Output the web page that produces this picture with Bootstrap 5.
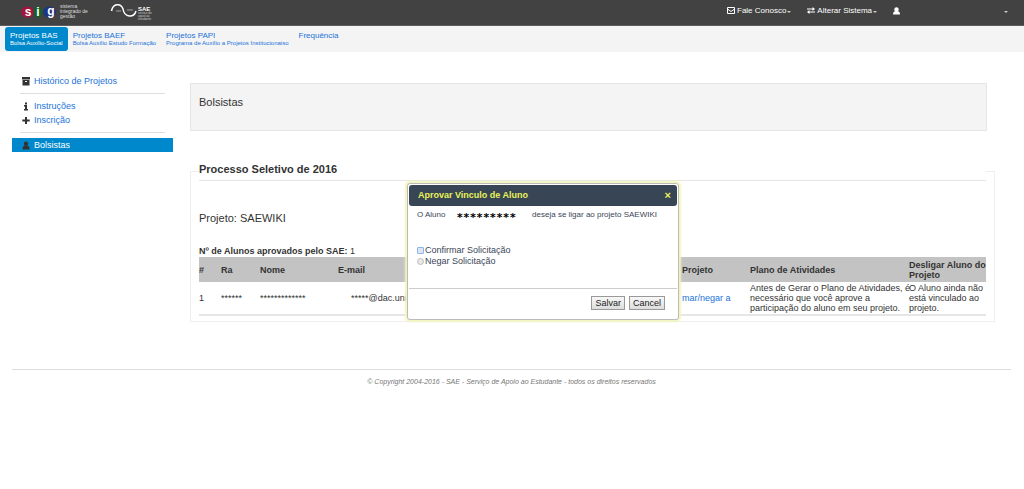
<!DOCTYPE html>
<html lang="pt-BR">
<head>
<meta charset="utf-8">
<meta name="viewport" content="width=device-width, initial-scale=1">
<title>SIG - SAE - Bolsistas</title>
<link href="https://cdn.jsdelivr.net/npm/bootstrap@5.3.0/dist/css/bootstrap.min.css" rel="stylesheet">
<style>
  body { font-family: "Liberation Sans", Arial, sans-serif; font-size: 9px; line-height: 10px; color: #333; min-height: 100vh; }
  a { color: #1a73d9; text-decoration: none; }
  .topbar { background: #424242; height: 26px; border-bottom: 1px solid #5c5c5c; padding-left: 21px; }
  .topbar a { color: #fff; font-size: 8px; }
  .topmenu { width: 297px; padding-bottom: 4px; }
  .topmenu svg { margin-right: 2px; }
  .topmenu .caret { width: 4px; border: 2px solid transparent; border-top-color: #ccc; border-bottom: 0; margin: 2px 0 0 1px; }
  .subnav { background: #f4f4f4; height: 26px; padding-left: 5px; }
  .subnav a { height: 24px; margin-top: 1px; padding: 4px 5px 0; font-size: 8px; line-height: 9px; border-radius: 3px; white-space: nowrap; }
  .subnav a.active { background: #0088cc; color: #fff; }
  .subnav small { display: block; font-size: 6px; line-height: 6px; }
  .sidebar { width: 161px; margin: 22px 17px 0 12px; }
  .sidebar a { height: 14px; padding-left: 9px; gap: 3px; }
  .sidebar a.active { background: #0088cc; color: #fff; }
  .sidebar svg { width: 10px; height: 9px; fill: #333; }
  .sidebar hr { margin: 5px 8px; border-top: 1px solid #ddd; opacity: 1; }
  .main { margin-top: 31px; padding-right: 29px; }
  .titlebox { background: #f4f4f4; border: 1px solid #e6e6e6; height: 48px; padding: 13px 8px; margin-right: 8px; font-size: 11px; line-height: 11px; }
  .process { border: 1px solid #eee; margin-top: 31px; padding: 0 8px 5px; }
  .process legend { float: none; font-size: 11px; line-height: 14px; font-weight: bold; border-bottom: 1px solid #e5e5e5; padding-bottom: 4px; margin: 0 0 30px; }
  .project { font-size: 11px; line-height: 14px; margin-bottom: 21px; }
  .count { margin-bottom: 1px; }
  .students { width: 100%; table-layout: fixed; border-bottom: 2px solid #e6e6e6; }
  .students th { background: #c3c3c3; height: 25px; padding: 0; }
  .students td { height: 33px; padding: 0; }
  .students .nw { white-space: nowrap; }
  .students .mail { padding-left: 13px; }
  .footer { margin: 47px 13px 0 12px; border-top: 1px solid #ddd; padding-top: 7px; font-size: 7px; font-style: italic; color: #777; }
  .dlg { position: absolute; left: 407px; top: 183px; width: 272px; height: 137px; background: #fff; border: 1px solid #bbb; border-radius: 3px; box-shadow: 0 0 2px 2px #f3f5bd; color: #3a4656; z-index: 5; padding: 1px; }
  .dlg-head { background: #384555; height: 21px; border-radius: 3px; padding: 0 6px 0 9px; }
  .dlg-head h2 { color: #e8f25a; font-size: 9px; line-height: 10px; font-weight: bold; margin: 0 0 2px; }
  .dlg-head button { color: #e8f25a; background: none; border: 0; padding: 0 0 2px; font-size: 11px; font-weight: bold; line-height: 10px; }
  .dlg-body { height: 83px; padding: 4px 8px 0; border-bottom: 1px solid #ccc; }
  .dlg-msg { font-size: 8px; line-height: 10px; margin-bottom: 22px; }
  .stars { color: #000; font-size: 11px; line-height: 10px; padding-top: 3px; margin: 0 16px 0 11px; font-family: "DejaVu Sans Mono", monospace; font-weight: bold; }
  .dlg-body input { appearance: none; width: 7px; height: 7px; border: 1px solid #bbb; background: #e8e8e8; margin: 2px 1px 0 0; border-radius: 4px; }
  .dlg-body input:checked { border-color: #8db4ee; background: #dde6f4; border-radius: 1px; }
  .dlg-body .opt { height: 11px; line-height: 10px; }
  .dlg-foot { padding: 7px 12px 0; gap: 4px; }
  .dlg-foot button { border: 1px solid #999; background: linear-gradient(#f8f8f8, #ddd); color: #222; font-size: 9px; line-height: 11px; padding: 0 3px; height: 14px; }
</style>
<script src="https://cdn.jsdelivr.net/npm/bootstrap@5.3.0/dist/js/bootstrap.bundle.min.js"></script>
</head>
<body>
<header class="topbar d-flex justify-content-between">
  <a href="#" aria-label="Início" class="d-flex">
    <svg width="140" height="25" viewBox="0 0 140 25" font-family="Liberation Sans, Arial, sans-serif" fill="#fff">
      <ellipse cx="6.500" cy="12" rx="6.500" ry="5.500" fill="#a3153c"/><ellipse cx="17" cy="12" rx="4.500" ry="5.500" fill="#14602f"/><ellipse cx="28.500" cy="12" rx="6.500" ry="5.500" fill="#1d3480"/>
      <g font-size="12" font-weight="bold" text-anchor="middle"><text x="7" y="16">s</text><text x="17" y="16">i</text><text x="30" y="15">g</text></g>
      <g font-size="5" fill="#ddd"><text x="39" y="8">sistema</text><text x="39" y="13">integrado de</text><text x="39" y="18">gestão</text></g>
      <path d="M90.500 11C92 3 100 3 102 9c1.500 9 11 9 13 2" fill="none" stroke="#fff" stroke-width="1.500"/>
      <path d="M95 11h5M106 10h6" stroke="#ccc" stroke-width=".7"/>
      <text x="117" y="11" font-size="6" font-weight="bold">SAE</text>
      <g font-size="3" fill="#ccc"><text x="117" y="14">serviço de</text><text x="117" y="17">apoio ao</text><text x="117" y="20">estudante</text></g>
    </svg>
  </a>
  <nav class="topmenu d-flex align-items-center">
    <a href="#" class="d-flex align-items-center"><svg width="8" height="7" viewBox="0 0 8 7" fill="none" stroke="#fff"><path d="M.5.5h7v6h-7zM.5 2L4 4.500 7.500 2"/></svg><span>Fale Conosco</span><i class="caret"></i></a>
    <a href="#" class="d-flex align-items-center ms-3"><svg width="8" height="7" viewBox="0 0 8 7" fill="#fff"><path d="M0 1.500h5.500V0L8 2 5.500 4V2.500H0zM8 4.500H2.500V3L0 5l2.500 2V5.500H8z"/></svg><span>Alterar Sistema</span><i class="caret"></i></a>
    <a href="#" aria-label="Usuário" class="d-flex ms-3"><svg width="7" height="8" viewBox="0 0 7 8" fill="#fff"><circle cx="3.500" cy="2.500" r="2.200"/><path d="M0 7.500c0-2.500 1-3.500 3.500-3.500S7 5 7 7.500z"/></svg></a>
    <a href="#" aria-label="Conta" class="ms-auto me-3 d-flex"><i class="caret"></i></a>
  </nav>
</header>
<nav class="subnav d-flex">
  <a href="#" class="active">Projetos BAS<small>Bolsa Auxílio-Social</small></a>
  <a href="#">Projetos BAEF<small>Bolsa Auxílio Estudo Formação</small></a>
  <a href="#">Projetos PAPI<small>Programa de Auxílio a Projetos Institucionaiso</small></a>
  <a href="#">Frequência</a>
</nav>
<div class="d-flex">
  <nav class="sidebar flex-shrink-0">
    <a href="#" class="d-flex align-items-center"><svg viewBox="0 0 10 9"><path d="M1 0h8v2.500H1zM1.500 3h7v5.500h-7zM4 4v1h2V4z" fill-rule="evenodd"/></svg><span>Histórico de Projetos</span></a>
    <hr>
    <a href="#" class="d-flex align-items-center"><svg viewBox="0 0 10 9"><path d="M4 .5h2v2H4zM3 3h3v4h1v1.500H3V7h1V4.500H3z"/></svg><span>Instruções</span></a>
    <a href="#" class="d-flex align-items-center"><svg viewBox="0 0 10 9"><path d="M4 1h2v2.500h2.700v2H6V8H4V5.500H1.300v-2H4z"/></svg><span>Inscrição</span></a>
    <hr>
    <a href="#" class="active d-flex align-items-center"><svg viewBox="0 0 10 9"><circle cx="5" cy="2.700" r="2.200"/><path d="M1.500 8.500c0-3 1-3.900 3.500-3.900s3.500.9 3.500 3.900z"/></svg><span>Bolsistas</span></a>
  </nav>
  <main class="main flex-grow-1">
    <h1 class="titlebox mb-0 fw-normal">Bolsistas</h1>
    <fieldset class="process">
      <legend>Processo Seletivo de 2016</legend>
      <div class="project">Projeto: SAEWIKI</div>
      <div class="count"><b>Nº de Alunos aprovados pelo SAE:</b> 1</div>
      <table class="students">
        <colgroup><col style="width:22px"><col style="width:39px"><col style="width:78px"><col style="width:344px"><col style="width:68px"><col style="width:159px"><col></colgroup>
        <thead><tr><th>#</th><th>Ra</th><th>Nome</th><th>E-mail</th><th>Projeto</th><th>Plano de Atividades</th><th class="nw">Desligar Aluno do<br>Projeto</th></tr></thead>
        <tbody><tr><td>1</td><td>******</td><td>*************</td><td class="mail">*****@dac.unicamp.br</td><td><a href="#">mar/negar a</a></td><td class="nw">Antes de Gerar o Plano de Atividades, é<br>necessário que você aprove a<br>participação do aluno em seu projeto.</td><td>O Aluno ainda não está vinculado ao projeto.</td></tr></tbody>
      </table>
    </fieldset>
  </main>
</div>
<footer class="footer text-center">© Copyright 2004-2016 - SAE - Serviço de Apoio ao Estudante - todos os direitos reservados</footer>

<form class="dlg" role="dialog" aria-labelledby="dlgTitle">
  <div class="dlg-head d-flex align-items-center justify-content-between"><h2 id="dlgTitle">Aprovar Vinculo de Aluno</h2><button type="button" aria-label="Fechar">×</button></div>
  <div class="dlg-body">
    <div class="dlg-msg d-flex"><span>O Aluno</span><span class="stars">*********</span><span>deseja se ligar ao projeto SAEWIKI</span></div>
    <div class="opt d-flex"><input type="radio" name="resp" id="conf" checked><label for="conf">Confirmar Solicitação</label></div>
    <div class="opt d-flex"><input type="radio" name="resp" id="neg"><label for="neg">Negar Solicitação</label></div>
  </div>
  <div class="dlg-foot d-flex justify-content-end"><button type="button">Salvar</button><button type="button">Cancel</button></div>
</form>
</body>
</html>
